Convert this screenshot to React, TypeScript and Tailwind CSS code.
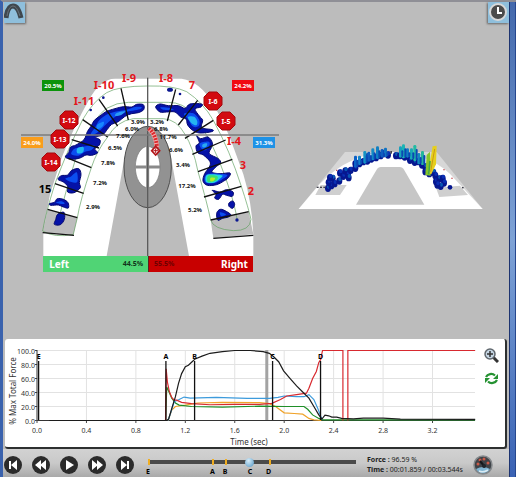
import { useState } from 'react'

type Point = [number, number]

// Closed smooth curve that passes through every point
function blob(points: Point[]) {
  const n = points.length
  const at = (i: number) => points[(i + n) % n]
  const curves = points.map((p, i) => {
    const before = at(i - 1)
    const next = at(i + 1)
    const after = at(i + 2)
    const c1 = [p[0] + (next[0] - before[0]) / 6, p[1] + (next[1] - before[1]) / 6]
    const c2 = [next[0] - (after[0] - p[0]) / 6, next[1] - (after[1] - p[1]) / 6]
    return `C${c1[0]} ${c1[1]} ${c2[0]} ${c2[1]} ${next[0]} ${next[1]}`
  })
  return `M${points[0][0]} ${points[0][1]}${curves.join('')}Z`
}

const contacts: Point[][] = [
  [[430, 311], [410, 310], [395, 318], [370, 317], [345, 323], [318, 332], [300, 345], [283, 358], [273, 376], [262, 392], [252, 416], [228, 432], [212, 438], [206, 455], [196, 468], [215, 475], [240, 471], [258, 462], [275, 463], [293, 455], [284, 444], [298, 432], [300, 417], [286, 408], [308, 402], [322, 385], [335, 370], [355, 362], [375, 346], [395, 338], [415, 335], [431, 326]],
  [[236, 503], [243, 520], [238, 545], [241, 560], [222, 575], [203, 573], [203, 556], [190, 543], [174, 535], [184, 524], [203, 522], [215, 508]],
  [[148, 608], [163, 604], [172, 593], [190, 595], [204, 605], [205, 621], [190, 618], [175, 612], [153, 613]],
  [[173, 640], [192, 634], [193, 655], [181, 671], [163, 670], [167, 656]],
  [[467, 318], [480, 309], [505, 314], [535, 314], [555, 322], [570, 309], [605, 309], [603, 318], [585, 324], [598, 345], [608, 358], [605, 380], [637, 386], [635, 392], [600, 396], [578, 388], [563, 372], [558, 354], [542, 348], [525, 333], [500, 333], [480, 333]],
  [[590, 404], [602, 413], [624, 408], [637, 425], [634, 440], [628, 458], [655, 473], [662, 486], [650, 496], [636, 513], [660, 518], [690, 516], [685, 530], [670, 541], [650, 551], [622, 553], [609, 540], [614, 518], [628, 498], [630, 482], [610, 462], [593, 455], [588, 435], [598, 425]],
  [[637, 568], [660, 573], [680, 566], [699, 573], [697, 586], [680, 583], [668, 580], [656, 595], [644, 591], [648, 580]],
  [[687, 606], [698, 600], [704, 610], [698, 622], [687, 616]],
  [[652, 632], [665, 625], [692, 640], [685, 648], [668, 652], [654, 658], [650, 645]]
]

const midTones: Point[][] = [
  [[424, 318], [405, 318], [380, 326], [345, 332], [318, 342], [298, 358], [286, 378], [272, 400], [284, 400], [300, 388], [320, 368], [345, 348], [375, 334], [405, 328], [422, 323]],
  [[265, 434], [245, 438], [222, 444], [214, 460], [235, 464], [255, 452], [273, 448], [284, 434]],
  [[230, 514], [232, 542], [214, 543], [196, 533], [212, 527]],
  [[482, 319], [510, 321], [520, 326], [490, 326]],
  [[552, 338], [580, 337], [598, 358], [595, 376], [578, 376], [564, 354]],
  [[600, 427], [626, 422], [628, 434], [615, 448], [602, 440]],
  [[622, 519], [680, 521], [668, 534], [644, 546], [616, 544]],
  [[660, 634], [678, 640], [664, 646]],
  [[168, 604], [185, 601], [194, 608], [178, 608]]
]

const hotSpots: { points: Point[]; fill: string }[] = [
  { points: [[350, 336], [375, 331], [365, 341], [346, 345]], fill: '#2a9cf5' },
  { points: [[292, 371], [311, 362], [308, 376], [292, 385]], fill: '#1787ff' },
  { points: [[232, 442], [250, 438], [249, 454], [232, 457]], fill: '#22b8f2' },
  { points: [[564, 348], [583, 347], [592, 362], [588, 373], [573, 365]], fill: '#25b4f0' },
  { points: [[608, 430], [621, 427], [619, 437], [608, 439]], fill: '#2aa8f0' },
  { points: [[622, 521], [666, 523], [658, 535], [642, 545], [619, 543]], fill: '#25d8e0' },
  { points: [[625, 524], [652, 526], [648, 539], [624, 543]], fill: '#3be070' },
  { points: [[632, 530], [645, 531], [640, 540], [631, 540]], fill: '#b6ee2a' }
]

const toothLines = [
  'M363 262L385 357', 'M297 295L353 375', 'M248 356L323 408', 'M215 416L297 441',
  'M205 472L274 500', 'M165 548L251 577', 'M143 625L232 650', 'M128 695L222 703',
  'M527 265L502 360', 'M593 298L535 372', 'M640 358L555 412', 'M677 417L577 460',
  'M697 475L594 512', 'M724 556L612 588', 'M746 632L632 657', 'M760 703L640 712'
]

const toothLabels = [
  { text: 'I-11', x: 84, y: 104 },
  { text: 'I-10', x: 104, y: 88 },
  { text: 'I-9', x: 129, y: 81 },
  { text: 'I-8', x: 166, y: 81 },
  { text: '7', x: 192, y: 88 },
  { text: 'I-4', x: 234, y: 144 },
  { text: '3', x: 243, y: 168 },
  { text: '2', x: 251, y: 194 }
]

const implants = [
  { text: 'I-12', x: 69, y: 119 },
  { text: 'I-13', x: 60, y: 138 },
  { text: 'I-14', x: 51, y: 161 },
  { text: 'I-6', x: 213, y: 100 },
  { text: 'I-5', x: 226, y: 120 }
]

const toothForces = [
  { text: '3.9%', x: 138, y: 123 },
  { text: '3.2%', x: 157, y: 123 },
  { text: '6.0%', x: 132, y: 130 },
  { text: '6.8%', x: 161, y: 130 },
  { text: '7.6%', x: 123, y: 137 },
  { text: '11.7%', x: 168, y: 138 },
  { text: '6.5%', x: 115, y: 149 },
  { text: '6.6%', x: 176, y: 151 },
  { text: '7.8%', x: 108, y: 164 },
  { text: '3.4%', x: 183, y: 166 },
  { text: '7.2%', x: 100, y: 184 },
  { text: '17.2%', x: 187, y: 187 },
  { text: '2.9%', x: 93, y: 208 },
  { text: '5.2%', x: 195, y: 211 }
]

const quadrants = [
  { text: '20.5%', x: 42, y: 79, fill: '#0b930b' },
  { text: '24.2%', x: 232, y: 79, fill: '#f00a12' },
  { text: '24.0%', x: 21, y: 136, fill: '#f99d1c' },
  { text: '31.3%', x: 253, y: 136, fill: '#1e92e6' }
]

function ArchView() {
  return (
    <svg viewBox="17 65 262 190" className="block w-full" role="img" aria-label="Bite force by tooth">
      <g transform="scale(0.33333)">
        <path d="M130 765V690L150 580L185 470Q225 370 265 300Q300 233 345 233H545Q600 240 640 310Q670 360 690 410L730 520Q755 600 760 700V765Z" fill="#fff" />
        <path d="M320 765L372 480Q385 380 443 380T515 480L567 765Z" fill="#bcbcbc" />
        <path d="M143 625L232 650L220 703L128 695Z" fill="#bdbdbd" />
        <path d="M632 657L746 632L760 700L640 712Z" fill="#bdbdbd" />
        <g fill="none" stroke="#5fa05f" strokeWidth="2">
          <path d="M128 690Q136 640 165 548Q205 440 248 356Q280 300 320 275Q355 255 443 255Q520 253 560 272Q610 305 640 358Q690 450 724 556Q745 620 753 655Q750 690 700 689Q640 685 632 657Q620 600 594 512Q580 440 555 400Q530 355 490 353H400Q350 360 323 408Q290 450 274 500Q240 600 232 650L220 700Q165 712 128 690Z" />
          <path d="M172 670Q200 560 228 470Q280 350 320 322Q350 304 385 304H505Q550 304 580 340Q640 420 680 540Q705 610 712 660" />
        </g>
        {contacts.map((points, i) => (
          <path key={i} d={blob(points)} fill="#0512a8" stroke="#04086e" strokeWidth="3" />
        ))}
        {midTones.map((points, i) => (
          <path key={i} d={blob(points)} fill="#0b4df0" />
        ))}
        {hotSpots.map((spot, i) => (
          <path key={i} d={blob(spot.points)} fill={spot.fill} />
        ))}
        <g fill="#0a1690">
          <ellipse cx="510" cy="266" rx="9" ry="6" />
          <circle cx="540" cy="279" r="4" />
          <circle cx="310" cy="290" r="4" />
          <circle cx="272" cy="327" r="4" />
          <circle cx="711" cy="657" r="5" />
        </g>
        <path d={toothLines.join('')} stroke="#111" strokeWidth="4" fill="none" />

        {/* Centre of force target */}
        <ellipse cx="443" cy="498" rx="71" ry="122" fill="#929292" stroke="#4d4d4d" strokeWidth="3" />
        <ellipse cx="443" cy="498" rx="37" ry="62" fill="#fff" stroke="#777" strokeWidth="2" />
        <path d="M443 436V560M406 498H480" stroke="#8a8a8a" strokeWidth="9" />
        <path d="M443 230V765" stroke="#5c5c5c" strokeWidth="4" />
        <path d="M63 402H837" stroke="#7b7b7b" strokeWidth="4" />
        <path d="M446 382Q468 398 471 440" fill="none" stroke="#f3b4b4" strokeWidth="14" />
        <path d="M446 382Q468 398 471 440" fill="none" stroke="#dc2a2e" strokeWidth="12" strokeDasharray="6 3" />
        <path d="M467 436L479 449L467 462L455 449Z" fill="#fff" stroke="#b3161b" strokeWidth="5" />
        <path d="M467 442V456M460 449H474" stroke="#b3161b" strokeWidth="3" />
      </g>

      {implants.map(tooth => (
        <g key={tooth.text}>
          <path
            transform={`translate(${tooth.x} ${tooth.y})`}
            d="M-4 -9H4L9 -4V4L4 9H-4L-9 4V-4Z"
            fill="#d20a10"
            stroke="#a3080c"
          />
          <text x={tooth.x} y={tooth.y + 3} textAnchor="middle" className="fill-white text-[7px] font-bold">
            {tooth.text}
          </text>
        </g>
      ))}
      {toothLabels.map(label => (
        <text key={label.text} x={label.x} y={label.y} textAnchor="middle" className="fill-[#e3161c] text-[11px] font-bold">
          {label.text}
        </text>
      ))}
      <text x="45" y="192" textAnchor="middle" className="fill-black text-[11px] font-bold">15</text>
      {toothForces.map(force => (
        <text key={force.text} x={force.x} y={force.y} textAnchor="middle" className="fill-[#111] text-[6px] font-bold">
          {force.text}
        </text>
      ))}
      {quadrants.map(quadrant => (
        <g key={quadrant.text}>
          <rect x={quadrant.x} y={quadrant.y} width="22" height="11" fill={quadrant.fill} />
          <text x={quadrant.x + 11} y={quadrant.y + 8} textAnchor="middle" className="fill-white text-[6px] font-bold">
            {quadrant.text}
          </text>
        </g>
      ))}
    </svg>
  )
}

// x, base and height of each force column, left to right
const columns: { x: number; y: number; h: number; fill: string }[] = [
  { x: 1066, y: 500, h: 36, fill: '#0b62c8' },
  { x: 1078, y: 492, h: 28, fill: '#1181c9' },
  { x: 1094, y: 488, h: 38, fill: '#1593c4' },
  { x: 1106, y: 482, h: 30, fill: '#0d5cc0' },
  { x: 1118, y: 478, h: 36, fill: '#1389c6' },
  { x: 1132, y: 474, h: 38, fill: '#1080c2' },
  { x: 1146, y: 470, h: 26, fill: '#0d5cc0' },
  { x: 1156, y: 468, h: 28, fill: '#1174c2' },
  { x: 1201, y: 470, h: 34, fill: '#18a0bd' },
  { x: 1210, y: 472, h: 42, fill: '#1bb4b4' },
  { x: 1222, y: 470, h: 28, fill: '#0f7cc4' },
  { x: 1234, y: 476, h: 34, fill: '#18a9b6' },
  { x: 1244, y: 480, h: 48, fill: '#22bba4' },
  { x: 1256, y: 490, h: 34, fill: '#128ac0' },
  { x: 1267, y: 492, h: 42, fill: '#22b79b' }
]

const bases: Point[] = [
  [984, 562], [994, 554], [986, 544], [998, 532], [990, 530], [1004, 548], [1018, 540], [1020, 516],
  [1030, 526], [1036, 510], [1044, 522], [1052, 508], [1046, 530], [1066, 502], [1066, 488], [1078, 488],
  [1090, 482], [1102, 480], [1102, 468], [1114, 474], [1128, 470], [1142, 464], [1152, 458], [1164, 462],
  [1188, 464], [1200, 464], [1214, 468], [1228, 466], [1230, 478], [1242, 472], [1244, 484], [1256, 482],
  [1266, 492], [1276, 498], [1276, 512], [1288, 518], [1300, 514], [1306, 524], [1308, 542], [1318, 534],
  [1328, 532], [1332, 546], [1322, 556], [1312, 552]
]

function ColumnView() {
  return (
    <svg viewBox="297 136 188 73" className="block w-full" role="img" aria-label="Force columns in perspective">
      <g transform="scale(0.33333)">
        <path d="M1035 453H1310L1448 624H896Z" fill="#d7d7d7" />
        <path d="M896 624L960 548Q1050 455 1170 453Q1300 455 1370 540L1448 624Z" fill="#fff" />
        <path d="M962 552H1040L1020 582H946Z" fill="#cfcfcf" />
        <path d="M1308 560L1380 554L1404 582L1318 588Z" fill="#cfcfcf" />
        <path d="M1143 498H1199Q1208 498 1213 508L1273 611H1068L1129 508Q1134 498 1143 498Z" fill="#c6c6c6" />
        {bases.map(([x, y], i) => (
          <g key={i}>
            <ellipse cx={x} cy={y} rx="9" ry="11" fill="#06178f" />
            <ellipse cx={x + 2} cy={y - 5} rx="5" ry="6" fill={i % 3 === 0 ? '#0a5ab5' : '#0a2fb4'} />
          </g>
        ))}
        <circle cx="1350" cy="559" r="7" fill="#06178f" />
        {columns.map(column => (
          <rect key={column.x} x={column.x - 4} y={column.y - column.h} width="9" height={column.h} rx="4" fill={column.fill} />
        ))}
        {columns.map(column => (
          <rect key={column.x} x={column.x + 3} y={column.y - column.h + 12} width="6" height={column.h - 14} rx="3" fill="#0b48b4" />
        ))}
        <path d="M1276 522L1280 462L1290 452L1292 524Z" fill="#86c52a" />
        <path d="M1284 516L1298 436L1310 434L1308 490L1294 520Z" fill="#e6cf1d" />
        <path d="M1292 512L1304 444" stroke="#c99a12" strokeWidth="3" />
        <path d="M1286 520L1290 480" stroke="#43a848" strokeWidth="5" />
        <g fill="#41414c">
          <rect x="950" y="557" width="6" height="4" />
          <rect x="960" y="557" width="6" height="4" />
          <rect x="970" y="557" width="6" height="4" />
          <rect x="1171" y="450" width="5" height="8" />
          <rect x="1386" y="558" width="5" height="4" />
        </g>
        <g fill="#c8585c">
          <rect x="1008" y="506" width="4" height="4" />
          <rect x="1330" y="504" width="4" height="4" />
          <rect x="1354" y="530" width="4" height="4" />
        </g>
      </g>
    </svg>
  )
}

const series: { name: string; color: string; points: Point[] }[] = [
  {
    name: 'back-left',
    color: '#f0a32a',
    points: [[1.06, 0], [1.09, 15], [1.12, 20], [1.2, 22], [1.3, 25], [1.5, 26], [1.8, 25.5], [1.88, 24], [1.93, 20], [2, 11], [2.08, 10], [2.15, 9], [2.2, 3], [2.24, 1], [2.3, 0]]
  },
  {
    name: 'front-left',
    color: '#1f8f28',
    points: [[1.04, 0], [1.05, 48], [1.07, 40], [1.09, 32], [1.12, 25], [1.15, 22], [1.25, 20], [1.5, 19], [1.8, 20.5], [2, 20], [2.16, 20], [2.19, 16], [2.23, 8], [2.28, 3], [2.31, 1], [3.545, 1]]
  },
  {
    name: 'back-right',
    color: '#3d9bdc',
    points: [[1.06, 0], [1.08, 10], [1.11, 27], [1.15, 30], [1.19, 33.5], [1.24, 32], [1.45, 33], [1.7, 31.5], [1.88, 31.5], [1.95, 33], [2, 35], [2.1, 34], [2.16, 34], [2.2, 37], [2.24, 30], [2.27, 18], [2.3, 4], [2.31, 2]]
  },
  {
    name: 'front-right',
    color: '#d8292f',
    points: [[1.04, 0], [1.045, 74], [1.055, 55], [1.07, 42], [1.09, 33], [1.11, 29], [1.13, 29], [1.17, 26], [1.25, 24], [1.4, 22.5], [1.6, 23], [1.8, 23], [1.9, 24.5], [1.97, 30], [2.02, 35], [2.1, 37], [2.18, 39], [2.2, 46], [2.23, 60], [2.26, 70], [2.28, 83], [2.295, 87], [2.31, 100], [2.475, 100], [2.475, 0]]
  },
  { name: 'front-right-2', color: '#d8292f', points: [[2.515, 0], [2.515, 100], [3.545, 100]] },
  {
    name: 'total',
    color: '#1c1c1c',
    points: [[0.1, 0], [1.05, 0], [1.065, 2], [1.09, 17], [1.12, 34], [1.145, 53], [1.17, 67], [1.2, 77], [1.225, 79], [1.255, 84], [1.28, 88], [1.335, 92], [1.4, 96], [1.5, 98.5], [1.6, 100], [1.725, 100], [1.83, 98.5], [1.88, 96], [1.915, 91], [1.955, 84], [1.995, 71], [2.05, 59.5], [2.1, 49.5], [2.16, 39], [2.2, 32], [2.24, 20], [2.28, 8], [2.305, 2], [2.33, 7.6], [2.36, 6.7], [2.385, 4.8], [2.425, 4.8], [2.465, 3], [2.56, 2.4], [2.64, 3.3], [2.8, 3.3], [2.94, 2], [3.545, 1.5]]
  }
]

const events = [
  { name: 'E', time: 0.013 },
  { name: 'A', time: 1.043 },
  { name: 'B', time: 1.275 },
  { name: 'C', time: 1.906 },
  { name: 'D', time: 2.294 }
]

const timeX = (t: number) => 37 + t * 123.6
const forceY = (f: number) => 420.5 - f * 0.7

function ForceChart() {
  return (
    <svg viewBox="5 340 472 107" className="block min-w-0 flex-1" role="img" aria-label="Force over time">
      {[0, 20, 40, 60, 80, 100].map(force => (
        <g key={force}>
          <path d={`M37 ${forceY(force)}H475`} stroke={force === 0 ? '#333' : '#e2e2e2'} />
          <path d={`M35 ${forceY(force)}H37`} stroke="#444" />
          <text x="35" y={forceY(force) + 3} textAnchor="end" className="fill-[#333] text-[7px]">
            {force.toFixed(1)}
          </text>
        </g>
      ))}
      {[0, 0.4, 0.8, 1.2, 1.6, 2, 2.4, 2.8, 3.2].map(time => (
        <g key={time}>
          <path d={`M${timeX(time)} 350V420`} stroke={time === 0 ? '#333' : '#e2e2e2'} />
          <path d={`M${timeX(time)} 420V423`} stroke="#444" />
          <text x={timeX(time)} y="433" textAnchor="middle" className="fill-[#333] text-[7px]">
            {time.toFixed(1)}
          </text>
        </g>
      ))}
      <text x="249" y="445" textAnchor="middle" className="fill-[#333] text-[8px]">Time (sec)</text>
      <text transform="translate(16 391) rotate(-90)" textAnchor="middle" className="fill-[#333] text-[8px]">
        % Max Total Force
      </text>
      <rect x={timeX(1.847)} y="350" width="3" height="70" fill="#a3a3a3" />
      {series.map(line => (
        <polyline
          key={line.name}
          points={line.points.map(([t, f]) => `${timeX(t)},${forceY(f)}`).join(' ')}
          fill="none"
          stroke={line.color}
          strokeWidth="1.2"
        />
      ))}
      {events.map(event => (
        <g key={event.name}>
          <path d={`M${timeX(event.time)} 361V420`} stroke="#111" strokeWidth="1.3" />
          <text x={timeX(event.time)} y="359" textAnchor="middle" className="fill-black text-[7px] font-bold">
            {event.name}
          </text>
        </g>
      ))}
    </svg>
  )
}

const transport = [
  { label: 'First frame', icon: 'M5 5H7V13H5ZM13 4V14L7 9Z' },
  { label: 'Rewind', icon: 'M9 4V14L3 9ZM14 4V14L8 9Z' },
  { label: 'Play', icon: 'M6 4L14 9L6 14Z' },
  { label: 'Fast forward', icon: 'M4 4L10 9L4 14ZM9 4L15 9L9 14Z' },
  { label: 'Last frame', icon: 'M5 4L11 9L5 14ZM11 5H13V13H11Z' }
]

const marks = [
  { name: 'E', place: 'left-0', label: 'left-0' },
  { name: 'A', place: 'left-[31%]', label: 'left-[31%]' },
  { name: 'B', place: 'left-[37%]', label: 'left-[37%]' },
  { name: 'C', place: '', label: 'left-[49%]' },
  { name: 'D', place: 'left-[58%]', label: 'left-[58%]' }
]

function Controls() {
  const [position, setPosition] = useState(486)

  return (
    <footer className="flex h-7 items-center bg-linear-to-b from-[#d2d2d2] via-[#c9c9c9] to-[#a9a9a9] pt-1 pr-4 pl-px">
      <div className="flex gap-[10px]">
        {transport.map(button => (
          <button key={button.label} type="button" aria-label={button.label} className="size-[18px] rounded-full bg-[#2b2b2b]">
            <svg viewBox="0 0 18 18" className="size-full fill-white">
              <path d={button.icon} />
            </svg>
          </button>
        ))}
      </div>

      <div className="relative ml-[14px] h-6 min-w-0 flex-1">
        <div className="mt-[7px] h-1 bg-[#4a4a4a]"></div>
        {marks.map(mark => (
          <div key={mark.name}>
            {mark.place && <span className={`absolute top-[6px] h-[6px] w-[2px] bg-[#f0ae22] ${mark.place}`}></span>}
            <span className={`absolute top-[15px] -translate-x-1/2 text-[7px] leading-[8px] font-bold text-black ${mark.label}`}>
              {mark.name}
            </span>
          </div>
        ))}
        <input
          type="range"
          min={0}
          max={1000}
          value={position}
          onChange={e => setPosition(Number(e.target.value))}
          aria-label="Playback position"
          className="absolute inset-x-0 top-1 h-[10px] w-full appearance-none bg-transparent [&::-webkit-slider-thumb]:size-[9px] [&::-webkit-slider-thumb]:appearance-none [&::-webkit-slider-thumb]:rounded-full [&::-webkit-slider-thumb]:bg-radial-[at_40%_30%] [&::-webkit-slider-thumb]:from-[#d9eefa] [&::-webkit-slider-thumb]:to-[#4d94c4]"
        />
      </div>

      <div className="ml-[11px] w-[103px] text-[7px] leading-[10px] whitespace-nowrap text-[#222]">
        <p><b>Force :</b> 96.59 %</p>
        <p><b>Time :</b> 00:01.859 / 00:03.544s</p>
      </div>
      <button type="button" aria-label="Playback speed" className="ml-[3px] size-5">
        <svg viewBox="0 0 20 20" className="size-full">
          <circle cx="10" cy="10" r="9" fill="#3e4348" stroke="#85898c" strokeWidth="1.5" />
          <path d="M3 14Q10 10 17 14A8 8 0 0 1 3 14Z" fill="#80b5d2" />
          <g fill="#c95a48">
            <circle cx="5" cy="9" r="1.5" />
            <circle cx="7" cy="5" r="1.5" />
            <circle cx="11" cy="4" r="1.5" />
            <circle cx="15" cy="8" r="1.5" />
          </g>
          <path d="M7 6L12 12" stroke="#15181b" strokeWidth="2" />
          <circle cx="11" cy="11" r="2" fill="#20252a" />
          <path d="M6 16Q10 18 15 15" fill="none" stroke="#d9eaf3" strokeWidth="1.5" />
        </svg>
      </button>
    </footer>
  )
}

export default function App() {
  return (
    <div className="flex min-h-screen border-t-2 border-l-[3px] border-t-[#8f8f96] border-l-[#3a62ad] bg-[#bcbcbc] font-['Noto_Sans',sans-serif]">
      <div className="flex min-w-0 flex-1 flex-col">
        <header className="flex justify-between pl-px">
          <button type="button" aria-label="Arch view" className="size-[21px] bg-[#8fbfdc] shadow-[1px_1px_2px_#666]">
            <svg viewBox="0 0 21 21" className="size-full" fill="none">
              <path d="M2 16C3 8 5 4 9 4S15 8 17 16" stroke="#3f474e" strokeWidth="5" />
              <path d="M3 14C4 8 6 4 9 4S14 8 16 14" stroke="#68727a" />
            </svg>
          </button>
          <button type="button" aria-label="Timing" className="size-[21px] bg-[#8fbfdc] shadow-[-1px_1px_2px_#666]">
            <svg viewBox="0 0 21 21" className="size-full">
              <circle cx="10" cy="10" r="8" fill="#4b4b4b" stroke="#d8d8d8" strokeWidth="2" />
              <path d="M10 5V11H14" fill="none" stroke="#fff" strokeWidth="2" />
            </svg>
          </button>
        </header>

        <main className="grid flex-1 grid-cols-[262fr_188fr] items-center gap-[18px] pr-6 pb-6 pl-[14px]">
          <section>
            <ArchView />
            <div className="mx-auto flex h-4 w-4/5 items-center text-[8px] font-bold">
              <div className="flex h-full flex-1 items-center justify-between bg-[#50d475] pr-[5px] pl-[6px]">
                <span className="text-[10px] text-white">Left</span>
                <span className="text-[7px] text-[#12351c]">44.5%</span>
              </div>
              <div className="flex h-full flex-1 items-center justify-between border-l border-[#5c2020] bg-[#c80000] pr-[5px] pl-[5px]">
                <span className="text-[7px] text-[#6e0000]">55.5%</span>
                <span className="text-[10px] text-white">Right</span>
              </div>
            </div>
          </section>
          <div className="pt-2">
            <ColumnView />
          </div>
        </main>

        <section className="mx-[2px] flex rounded-[3px] border-r-2 border-b-2 border-[#2d3030] bg-white pt-px">
          <ForceChart />
          <div className="flex w-7 flex-col items-center gap-2 pt-[8px]">
            <button type="button" aria-label="Zoom in" className="size-[15px]">
              <svg viewBox="0 0 15 15" className="size-full" fill="none">
                <path d="M9 9L14 14" stroke="#333" strokeWidth="3" />
                <circle cx="6" cy="6" r="5" fill="#c5d6e4" stroke="#60676e" strokeWidth="1.5" />
                <path d="M6 3V9M3 6H9" stroke="#333" strokeWidth="1.5" />
              </svg>
            </button>
            <button type="button" aria-label="Reset zoom" className="size-[15px]">
              <svg viewBox="0 0 15 15" className="size-full" fill="none" stroke="#259232" strokeWidth="2.2">
                <path d="M2 6A5.5 5 0 0 1 11 4.5M13 9A5.5 5 0 0 1 4 10.5" />
                <path d="M14 3V8H9ZM1 12V7H6Z" fill="#259232" stroke="none" />
              </svg>
            </button>
          </div>
        </section>

        <Controls />
      </div>
      <div className="w-[7px] border-x border-r-[#27488f] border-l-[#1d3470] bg-linear-to-b from-[#4469ac] via-[#7fa3d6] to-[#3a62b4]"></div>
    </div>
  )
}
